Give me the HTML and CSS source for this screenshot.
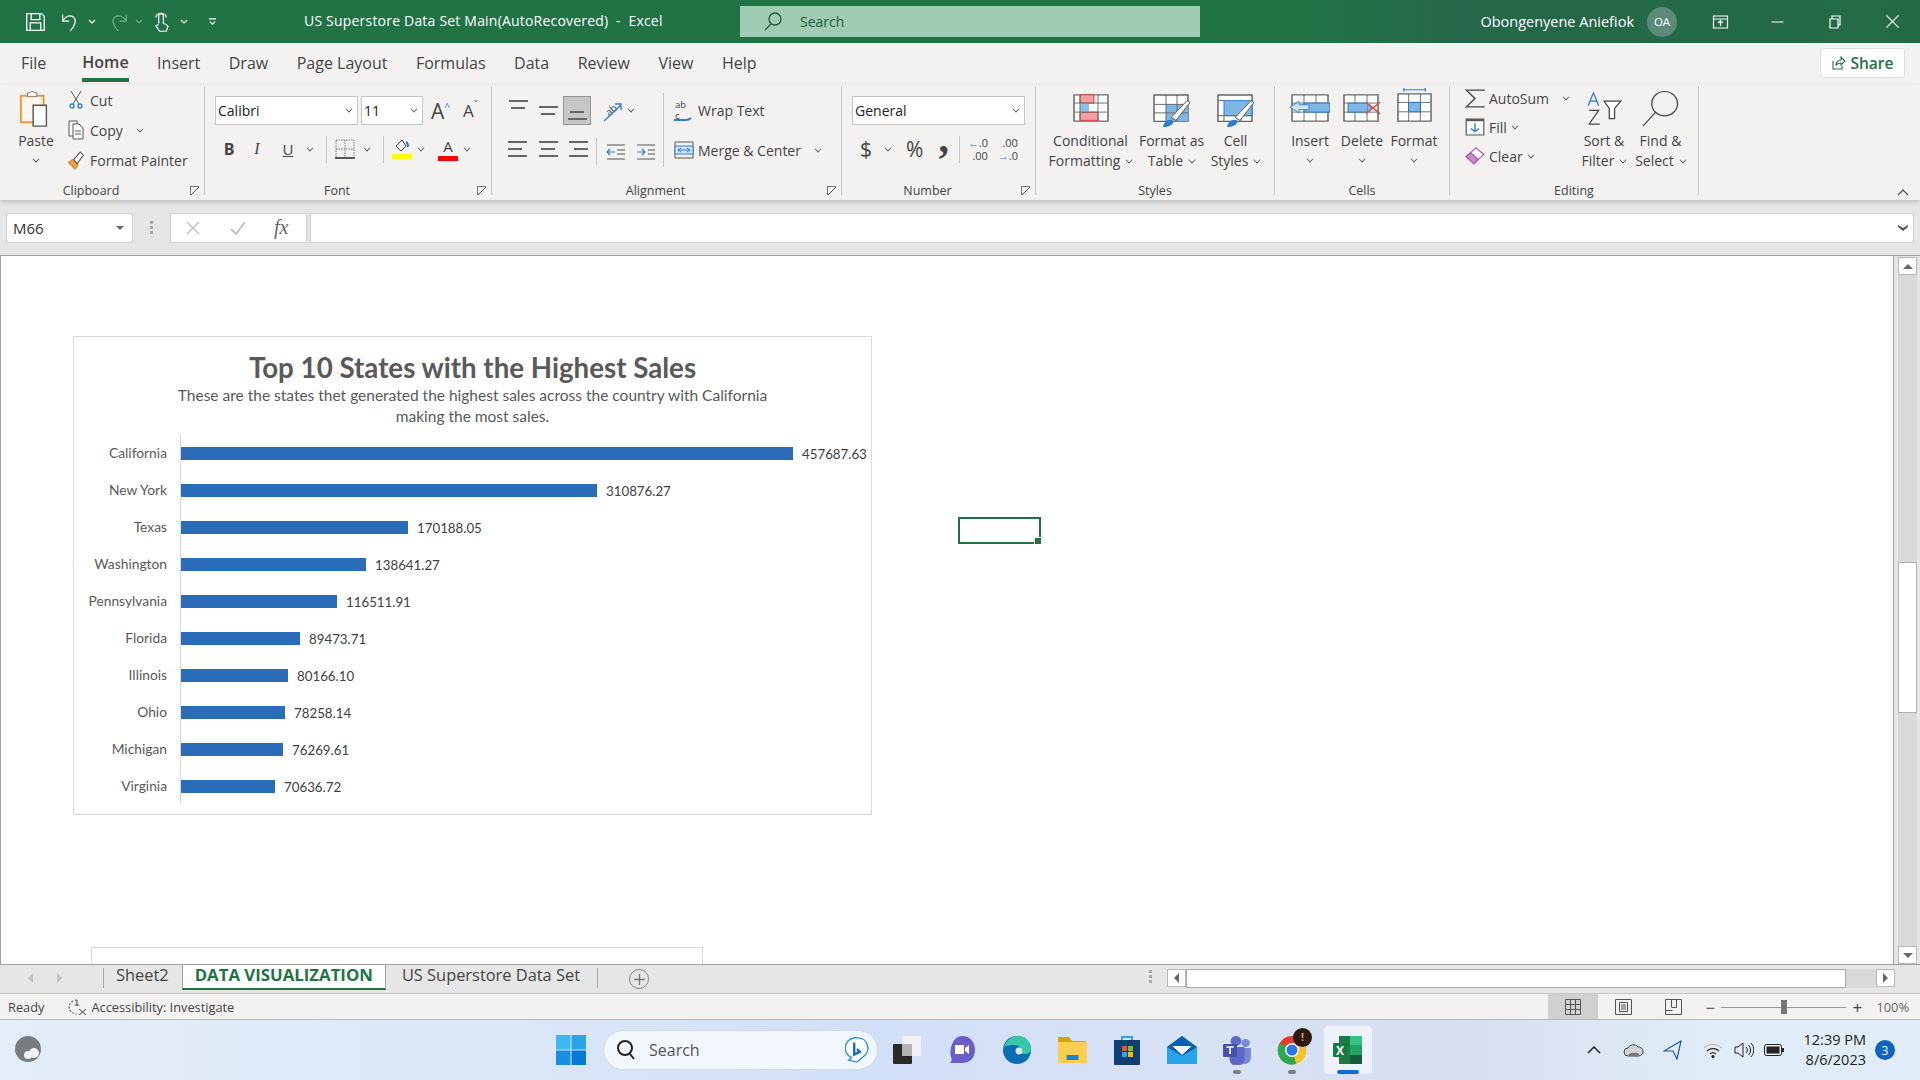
FILE: index.html
```html
<!DOCTYPE html>
<html lang="en">

<head>
    <meta charset="UTF-8">
    <title>US Superstore Data Set Main(AutoRecovered) - Excel</title>
    <link rel="stylesheet" href="styles.css">
</head>

<body>
    <!-- title bar -->
    <div class="titlebar">
        <div class="qat">
            <svg class="q-save" width="21" height="20" viewBox="0 0 24 24" preserveAspectRatio="none" fill="none" stroke="#fff" stroke-width="1.5"><path d="M2 2h17l3 3v17H2zM7 2v7h10V2M6 22v-9h12v9"/></svg>
            <svg class="q-undo" width="18" height="20" viewBox="0 0 22 24" preserveAspectRatio="none" fill="none" stroke="#fff" stroke-width="1.5"><path d="M2 3v8h8M2 11c3-6 9-8 13-5s3 10-4 17"/></svg>
            <svg class="q-chev" width="8" height="6" viewBox="0 0 8 6" fill="none" stroke="#fff" stroke-width="1.2"><path d="M1 1l3 3 3-3"/></svg>
            <svg class="q-redo" width="19" height="20" viewBox="0 0 22 24" preserveAspectRatio="none" fill="none" stroke="#6fa88a" stroke-width="1.5"><path d="M20 3v8h-8M20 11c-3-6-9-8-13-5s-3 10 4 17"/></svg>
            <svg class="q-chev2" width="8" height="6" viewBox="0 0 8 6" fill="none" stroke="#6fa88a" stroke-width="1.2"><path d="M1 1l3 3 3-3"/></svg>
            <svg class="q-touch" width="15" height="20" viewBox="0 0 16 26" preserveAspectRatio="none" fill="none" stroke="#fff" stroke-width="1.3"><path d="M5 15V5a2.500 2.500 0 0 1 5 0v10l3 1 2 3-2 6H6l-4-7 3-2M2 7a5.500 5.500 0 0 1 11 0"/></svg>
            <svg class="q-chev3" width="8" height="6" viewBox="0 0 8 6" fill="none" stroke="#fff" stroke-width="1.2"><path d="M1 1l3 3 3-3"/></svg>
            <svg width="9" height="8" viewBox="0 0 10 9" fill="none" stroke="#fff" stroke-width="1.2"><path d="M1 1h8M2 4l3 3 3-3"/></svg>
        </div>
        <div class="doc-title">US Superstore Data Set Main(AutoRecovered)&nbsp; -&nbsp; Excel</div>
        <div class="title-search">
            <svg width="18" height="20" viewBox="0 0 18 20" fill="none" stroke="#1d5c3c" stroke-width="1.3"><circle cx="11" cy="7" r="6"/><path d="M7 12l-6 6"/></svg>
            <span>Search</span>
        </div>
        <div class="account">
            <span class="user">Obongenyene Aniefiok</span>
            <span class="avatar">OA</span>
            <svg class="win-btn" width="17" height="14" viewBox="0 0 16 14" fill="none" stroke="#fff" stroke-width="1.2"><path d="M1 1h14v12H1zM1 4h14M8 11V6M5.500 8L8 5.500 10.500 8"/></svg>
            <svg class="win-btn" width="13" height="2" viewBox="0 0 12 2" stroke="#fff"><path d="M0 1h12"/></svg>
            <svg class="win-btn" width="12" height="14" viewBox="0 0 12 14" fill="none" stroke="#fff" stroke-width="1.2"><path d="M1 4h8v9H1zM3 4V1h8v9H9"/></svg>
            <svg class="win-btn" width="13" height="13" viewBox="0 0 12 12" stroke="#fff" stroke-width="1.1"><path d="M0 0l12 12M12 0L0 12"/></svg>
        </div>
    </div>

    <!-- tabs -->
    <div class="menu">
        <a>File</a>
        <a class="active">Home</a>
        <a>Insert</a>
        <a>Draw</a>
        <a>Page Layout</a>
        <a>Formulas</a>
        <a>Data</a>
        <a>Review</a>
        <a>View</a>
        <a>Help</a>
        <button class="share">
            <svg width="14" height="14" viewBox="0 0 14 14" fill="none" stroke="#217346" stroke-width="1.1"><path d="M1 5v8h9v-3M4 9c0-3 3-5 5-5V1l4 4-4 4V7C7 7 5 8 4 9z"/></svg>
            Share
        </button>
    </div>

    <!-- ribbon -->
    <div class="ribbon">
        <section class="group clipboard">
            <div class="group-body">
                <div class="big-btn paste">
                    <div class="big-icon high">
                        <svg width="34" height="38" viewBox="0 0 36 40" preserveAspectRatio="none"><path d="M2 6h24v28H2z" fill="#fdf6ea" stroke="#e8973a" stroke-width="2"/><path d="M9 7V3h3l2-2 2 2h3v4z" fill="#fff" stroke="#777" stroke-width="1"/><path d="M15 16h14v22H15z" fill="#fff" stroke="#555" stroke-width="1.5"/></svg>
                    </div>
                    <span>Paste</span>
                    <i class="caret below"></i>
                </div>
                <div class="stack">
                    <div class="small-btn">
                        <svg width="14" height="20" viewBox="0 0 14 20" fill="none"><path d="M2 1l8 13M12 1L4 14" stroke="#555" stroke-width="1"/><circle cx="3" cy="16" r="2" stroke="#2b7cd3" stroke-width="1.3"/><circle cx="11" cy="16" r="2" stroke="#2b7cd3" stroke-width="1.3"/></svg>
                        <span>Cut</span>
                    </div>
                    <div class="small-btn">
                        <svg width="16" height="20" viewBox="0 0 16 20" fill="#fff" stroke="#555"><path d="M1 1h8v15H1z"/><path d="M5 4h6l4 4v11H5zM7 11h6M7 14h6"/></svg>
                        <span>Copy</span>
                        <i class="caret wide"></i>
                    </div>
                    <div class="small-btn">
                        <svg width="17" height="19" viewBox="0 0 16 18"><path d="M1 11l6 6 3-4-5-5z" fill="#f0a23c" stroke="#d9762a"/><path d="M6 8l6-7 3 3-6 8z" fill="#fff" stroke="#555"/></svg>
                        <span>Format Painter</span>
                    </div>
                </div>
            </div>
            <div class="group-label launch">Clipboard<i class="launcher"></i></div>
        </section>

        <section class="group font">
            <div class="group-body column">
                <div class="row font-row">
                    <div class="combo font-name">Calibri<i class="caret"></i></div>
                    <div class="combo font-size">11<i class="caret"></i></div>
                    <span class="grow-font">A<sup>^</sup></span>
                    <span class="grow-font small">A<sup>ˇ</sup></span>
                </div>
                <div class="row tools">
                    <b class="tool">B</b>
                    <em class="tool">I</em>
                    <u class="tool under">U</u>
                    <i class="caret"></i>
                    <span class="sep"></span>
                    <svg class="icon" width="20" height="20" viewBox="0 0 20 20" fill="none" stroke="#777" stroke-dasharray="1.5 1"><path d="M1 1h18v18H1zM10 1v18M1 10h18"/><path d="M0 19h20" stroke="#333" stroke-width="1.5" stroke-dasharray="none"/></svg>
                    <i class="caret"></i>
                    <span class="sep"></span>
                    <span class="color-btn">
                        <svg width="18" height="14" viewBox="0 0 18 14" fill="none" stroke="#444"><path d="M3 7l6-6 4 6-5 5z"/><path d="M13 3c2 1 2 3 2 5" stroke="#2b7cd3" stroke-width="2"/></svg>
                        <span class="swatch yellow"></span>
                    </span>
                    <i class="caret"></i>
                    <span class="color-btn letter">A<span class="swatch red"></span></span>
                    <i class="caret"></i>
                </div>
            </div>
            <div class="group-label launch">Font<i class="launcher"></i></div>
        </section>

        <section class="group alignment">
            <div class="group-body">
                <div class="align-grid">
                    <span class="al top"><i></i><i class="s"></i></span>
                    <span class="al mid"><i></i><i class="s"></i></span>
                    <span class="al bot on"><i class="s"></i><i></i></span>
                    <span class="orient">
                        <svg width="22" height="24" viewBox="0 0 22 24" fill="none"><text x="5" y="15" transform="rotate(-40 10 12)" font-size="10" fill="#444" stroke="none" font-family="Open Sans, sans-serif">ab</text><path d="M3 22L20 6M14 5h6v6" stroke="#2b7cd3" stroke-width="1.3"/></svg>
                        <i class="caret"></i>
                    </span>
                    <span class="al left"><i></i><i class="s"></i><i></i></span>
                    <span class="al center"><i></i><i class="s"></i><i></i></span>
                    <span class="al right"><i></i><i class="s"></i><i></i></span>
                    <span class="indents">
                        <span class="sep"></span>
                        <svg width="20" height="18" viewBox="0 0 20 18" fill="none" stroke="#555" stroke-width="1.2"><path d="M1 2h18M11 7h8M11 11h8M1 16h18"/><path d="M9 9H1M4 6L1 9l3 3" stroke="#2b7cd3"/></svg>
                        <svg width="20" height="18" viewBox="0 0 20 18" fill="none" stroke="#555" stroke-width="1.2"><path d="M1 2h18M12 7h7M12 11h7M1 16h18"/><path d="M1 9h8M6 6l3 3-3 3" stroke="#2b7cd3"/></svg>
                    </span>
                </div>
                <div class="stack wrap-col">
                    <div class="small-btn">
                        <span class="wrap-abc">ab<br>c</span>
                        <span>Wrap Text</span>
                    </div>
                    <div class="small-btn">
                        <svg width="20" height="20" viewBox="0 0 20 20" fill="none" stroke="#555"><path d="M1 2h18v16H1z"/><path d="M1 6h18v8H1z" fill="#cde4f7" stroke="#2b7cd3"/><path d="M4 10h12M7 8l-3 2 3 2M13 8l3 2-3 2" stroke="#2b7cd3"/></svg>
                        <span>Merge &amp; Center</span>
                        <i class="caret wide"></i>
                    </div>
                </div>
            </div>
            <div class="group-label launch">Alignment<i class="launcher"></i></div>
        </section>

        <section class="group number">
            <div class="group-body column">
                <div class="row"><div class="combo format">General<i class="caret"></i></div></div>
                <div class="row tools number-tools">
                    <span class="num-sym">$</span>
                    <i class="caret"></i>
                    <span class="num-sym pct">%</span>
                    <b class="num-sym comma">,</b>
                    <span class="sep"></span>
                    <span class="dec"><b>←</b>.0<br>.00</span>
                    <span class="dec">.00<br><b>→</b>.0</span>
                </div>
            </div>
            <div class="group-label launch">Number<i class="launcher"></i></div>
        </section>

        <section class="group styles">
            <div class="group-body">
                <div class="big-btn cf">
                    <div class="big-icon">
                        <svg width="36" height="28" viewBox="0 0 36 34" preserveAspectRatio="none" fill="none"><path d="M1 1h34v32H1z" fill="#fff" stroke="#666" stroke-width="1.5"/><path d="M7 1h14v10H7zM7 22h18v10H7z" fill="#f6a0a5" stroke="#d9342b"/><path d="M7 11h9v11H7z" fill="#8fc0ea"/><path d="M1 11h34M1 22h34M7 1v32M25 1v32" stroke="#666"/></svg>
                    </div>
                    <span>Conditional<br>Formatting<i class="caret in"></i></span>
                </div>
                <div class="big-btn ft">
                    <div class="big-icon">
                        <svg width="38" height="34" viewBox="0 0 38 36" preserveAspectRatio="none" fill="none"><path d="M1 1h34v28H1z" fill="#fff" stroke="#666" stroke-width="1.5"/><path d="M13 11h22v18H13z" fill="#7fb6e8"/><path d="M1 11h34M1 20h34M13 1v28M24 1v28" stroke="#666"/><path d="M18 25L34 7l3 2-14 19z" fill="#fff" stroke="#555"/><path d="M10 35c1-6 6-9 10-7 2 3-3 7-10 7z" fill="#2b7cd3"/></svg>
                    </div>
                    <span>Format as<br>Table<i class="caret in"></i></span>
                </div>
                <div class="big-btn cs">
                    <div class="big-icon">
                        <svg width="38" height="34" viewBox="0 0 38 36" preserveAspectRatio="none" fill="none"><path d="M1 1h34v28H1z" fill="#fff" stroke="#666" stroke-width="1.5"/><path d="M7 7h28v16H7z" fill="#7fb6e8" stroke="#2b7cd3"/><path d="M1 7h6M1 23h34M7 23v6M24 23v6" stroke="#666"/><path d="M18 25L34 7l3 2-14 19z" fill="#fff" stroke="#555"/><path d="M10 35c1-6 6-9 10-7 2 3-3 7-10 7z" fill="#2b7cd3"/></svg>
                    </div>
                    <span>Cell<br>Styles<i class="caret in"></i></span>
                </div>
            </div>
            <div class="group-label">Styles</div>
        </section>

        <section class="group cells">
            <div class="group-body">
                <div class="big-btn">
                    <div class="big-icon">
                        <svg width="40" height="28" viewBox="0 0 40 34" preserveAspectRatio="none" fill="none"><path d="M2 1h36v32H2z" fill="#fff" stroke="#666" stroke-width="1.5"/><path d="M2 11h36M2 22h36M14 1v32M26 1v32" stroke="#666"/><path d="M14 11h26v11H14z" fill="#7fb6e8" stroke="#1f6cb5"/><path d="M0 16l9-7v4h10v6H9v4z" fill="#cfe3f6" stroke="#2b7cd3"/></svg>
                    </div>
                    <span>Insert</span>
                    <i class="caret below"></i>
                </div>
                <div class="big-btn">
                    <div class="big-icon">
                        <svg width="38" height="28" viewBox="0 0 38 34" preserveAspectRatio="none" fill="none"><path d="M1 1h34v32H1z" fill="#fff" stroke="#666" stroke-width="1.5"/><path d="M1 11h34M1 22h34M12 1v32M24 1v32" stroke="#666"/><path d="M5 11h20v11H5z" fill="#7fb6e8" stroke="#1f6cb5"/><path d="M25 11l6 5-6 6z" fill="#7fb6e8"/><path d="M23 10l14 14M37 10L23 24" stroke="#e8443a" stroke-width="1.5"/></svg>
                    </div>
                    <span>Delete</span>
                    <i class="caret below"></i>
                </div>
                <div class="big-btn">
                    <div class="big-icon tall">
                        <svg width="35" height="34" viewBox="0 0 36 40" preserveAspectRatio="none" fill="none"><path d="M7 2h22M7 0v4M29 0v4" stroke="#2b7cd3" stroke-width="1.3"/><path d="M1 7h34v32H1z" fill="#fff" stroke="#666" stroke-width="1.5"/><path d="M1 17h34M1 28h34M12 7v32M24 7v32" stroke="#666"/><path d="M12 17h12v11H12z" fill="#7fb6e8" stroke="#1f6cb5"/></svg>
                    </div>
                    <span>Format</span>
                    <i class="caret below"></i>
                </div>
            </div>
            <div class="group-label">Cells</div>
        </section>

        <section class="group editing">
            <div class="group-body">
                <div class="stack edit-col">
                    <div class="small-btn">
                        <svg width="18" height="19" viewBox="0 0 16 18" preserveAspectRatio="none" fill="none" stroke="#444" stroke-width="1.2"><path d="M15 2V1H1l7 8-7 8h14v-1"/></svg>
                        <span>AutoSum</span>
                        <i class="caret wide"></i>
                    </div>
                    <div class="small-btn">
                        <svg width="20" height="18" viewBox="0 0 17 17" preserveAspectRatio="none" fill="#fff" stroke="#555"><path d="M1 1h15v15H1z"/><path d="M1 2h15" stroke-width="2"/><path d="M8.5 5v8M5 10l3.500 3 3.500-3" fill="none" stroke="#2b7cd3" stroke-width="1.2"/></svg>
                        <span>Fill</span>
                        <i class="caret"></i>
                    </div>
                    <div class="small-btn">
                        <svg width="20" height="19" viewBox="0 0 18 20" preserveAspectRatio="none"><path d="M1 10l9-9 7 7-9 9z" fill="#fff" stroke="#a64ea8"/><path d="M1 10l4-4 7 7-4 5z" fill="#c88ac9" stroke="#a64ea8"/></svg>
                        <span>Clear</span>
                        <i class="caret"></i>
                    </div>
                </div>
                <div class="big-btn sort">
                    <div class="big-icon sort-icon">
                        <svg width="36" height="33" viewBox="0 0 34 36" preserveAspectRatio="none" fill="none"><path d="M2 15L7 1l5 14M4 10h6" stroke="#2b7cd3" stroke-width="1.2"/><path d="M3 20h9L3 35h10" stroke="#444" stroke-width="1.2"/><path d="M17 10h16l-6 8v11h-5V18z" fill="#fff" stroke="#444" stroke-width="1.2"/></svg>
                    </div>
                    <span>Sort &amp;<br>Filter<i class="caret in"></i></span>
                </div>
                <div class="big-btn find">
                    <div class="big-icon high">
                        <svg width="37" height="37" viewBox="0 0 36 38" preserveAspectRatio="none" fill="none" stroke="#444" stroke-width="1.2"><circle cx="22" cy="14" r="12.5"/><path d="M13 23L1 37"/></svg>
                    </div>
                    <span>Find &amp;<br>Select<i class="caret in"></i></span>
                </div>
            </div>
            <div class="group-label">Editing</div>
        </section>

        <svg class="collapse" width="12" height="7" viewBox="0 0 12 7" fill="none" stroke="#444" stroke-width="1.1"><path d="M1 6l5-5 5 5"/></svg>
    </div>

    <!-- formula bar -->
    <div class="formula-bar">
        <div class="name-box">M66<span class="tri"></span></div>
        <div class="grip"><i></i><i></i><i></i></div>
        <div class="fx-btns">
            <svg width="14" height="14" viewBox="0 0 14 14" stroke="#c4c4c4" stroke-width="1.6"><path d="M1 1l12 12M13 1L1 13"/></svg>
            <svg width="16" height="14" viewBox="0 0 16 14" fill="none" stroke="#c4c4c4" stroke-width="2"><path d="M1 8l5 5 9-12"/></svg>
            <span class="fx">fx</span>
        </div>
        <div class="formula-input"><svg width="10" height="6" viewBox="0 0 10 6" fill="#555"><path d="M0 0l5 3 5-3v2L5 6 0 2z"/></svg></div>
    </div>

    <!-- sheet -->
    <div class="workspace">
        <div class="sheet">
            <div class="chart">
                <h1>Top 10 States with the Highest Sales</h1>
                <p>These are the states thet generated the highest sales across the country with California<br>making the most sales.</p>
                <div class="plot">
                    <div class="bar-row"><span class="state">California</span><span class="bar" style="width:612px"></span><span class="val">457687.63</span></div>
                    <div class="bar-row"><span class="state">New York</span><span class="bar" style="width:416px"></span><span class="val">310876.27</span></div>
                    <div class="bar-row"><span class="state">Texas</span><span class="bar" style="width:227px"></span><span class="val">170188.05</span></div>
                    <div class="bar-row"><span class="state">Washington</span><span class="bar" style="width:185px"></span><span class="val">138641.27</span></div>
                    <div class="bar-row"><span class="state">Pennsylvania</span><span class="bar" style="width:156px"></span><span class="val">116511.91</span></div>
                    <div class="bar-row"><span class="state">Florida</span><span class="bar" style="width:119px"></span><span class="val">89473.71</span></div>
                    <div class="bar-row"><span class="state">Illinois</span><span class="bar" style="width:107px"></span><span class="val">80166.10</span></div>
                    <div class="bar-row"><span class="state">Ohio</span><span class="bar" style="width:104px"></span><span class="val">78258.14</span></div>
                    <div class="bar-row"><span class="state">Michigan</span><span class="bar" style="width:102px"></span><span class="val">76269.61</span></div>
                    <div class="bar-row"><span class="state">Virginia</span><span class="bar" style="width:94px"></span><span class="val">70636.72</span></div>
                </div>
            </div>
            <div class="active-cell"></div>
            <div class="next-chart"></div>
        </div>
        <div class="vscroll">
            <span class="sb-btn"><i class="tri-up"></i></span>
            <div class="vtrack"><span class="vthumb"></span></div>
            <span class="sb-btn"><i class="tri-down"></i></span>
        </div>
    </div>

    <!-- sheet tabs -->
    <div class="tabs">
        <div class="tab-nav"><i class="nav-l"></i><i class="nav-r"></i></div>
        <a class="sheet-tab first">Sheet2</a>
        <a class="sheet-tab current">DATA VISUALIZATION</a>
        <a class="sheet-tab last">US Superstore Data Set</a>
        <span class="add-sheet">
            <svg width="11" height="11" viewBox="0 0 11 11" stroke="#777" stroke-width="1.4"><path d="M5.500 0v11M0 5.500h11"/></svg>
        </span>
        <div class="grip hgrip"><i></i><i></i><i></i></div>
        <div class="hscroll">
            <span class="sb-btn"><i class="nav-l dark"></i></span>
            <div class="htrack"><span class="hthumb"></span></div>
            <span class="sb-btn"><i class="nav-r dark"></i></span>
        </div>
    </div>

    <!-- status bar -->
    <div class="status">
        <span>Ready</span>
        <span class="a11y">
            <svg width="19" height="17" viewBox="0 0 17 17" preserveAspectRatio="none" fill="none" stroke="#555"><path d="M8 1a7 7 0 1 0 0 14" stroke-dasharray="2 1.5"/><path d="M8 1v6M6 6h4M10 10l6 6M16 10l-6 6"/></svg>
            Accessibility: Investigate
        </span>
        <div class="views">
            <span class="view on"><svg width="16" height="16" viewBox="0 0 16 16" fill="none" stroke="#555"><path d="M.5.5h15v15H.5zM5.500.5v15M10.500.5v15M.5 5.500h15M.5 10.500h15"/></svg></span>
            <span class="view"><svg width="17" height="16" viewBox="0 0 17 16" fill="none" stroke="#555"><path d="M.5.5h16v15H.5zM4.500 3.500h8v9h-8zM6 6h5M6 8h5M6 10h5"/></svg></span>
            <span class="view"><svg width="17" height="16" viewBox="0 0 17 16" fill="none" stroke="#555"><path d="M.5.5h16v15H.5zM6.500.5v8h5v-8M.5 11.500h7"/></svg></span>
        </div>
        <div class="zoom-ctl">
            <span class="zoom-sign">−</span>
            <span class="zoom-track"><i></i></span>
            <span class="zoom-sign">+</span>
            <span class="zoom-pct">100%</span>
        </div>
    </div>

    <!-- windows taskbar -->
    <div class="taskbar">
        <div class="weather">
            <svg width="30" height="30" viewBox="0 0 30 30"><circle cx="14" cy="14" r="13" fill="#777c80"/><circle cx="20" cy="18" r="5" fill="#f1f3f6"/><circle cx="14" cy="20" r="4" fill="#f1f3f6"/></svg>
        </div>
        <div class="task-center">
            <svg class="start" width="30" height="30" viewBox="0 0 30 30"><rect width="14.5" height="14.5" fill="#3cb8f0"/><rect x="15.5" width="14.5" height="14.5" fill="#2aa4e8"/><rect y="15.5" width="14.5" height="14.5" fill="#1a8fe0"/><rect x="15.5" y="15.5" width="14.5" height="14.5" fill="#0a78d6"/></svg>
            <div class="task-search">
                <svg width="20" height="22" viewBox="0 0 20 22" fill="none" stroke="#222" stroke-width="2"><circle cx="9" cy="9" r="7"/><path d="M14 15l4 5"/></svg>
                <span>Search</span>
                <svg class="bing" width="24" height="26" viewBox="0 0 24 28" fill="none"><path d="M12 1a11 11 0 0 1 7 20l-7 6-9-2 3-3A11 11 0 0 1 12 1z" fill="#fff" stroke="#2a8fe0" stroke-width="1.5"/><path d="M9 6v13l6-3-3-3" stroke="#0f6cbd" stroke-width="2.5"/></svg>
            </div>
            <span class="app"><svg width="28" height="28" viewBox="0 0 28 28"><rect y="8" width="19" height="20" rx="1" fill="#2a2a2a"/><rect x="9" y="0" width="19" height="20" rx="1" fill="#f1f2f5"/><rect x="9" y="8" width="10" height="12" fill="#b4b4b4"/></svg></span>
            <span class="app"><svg width="28" height="30" viewBox="0 0 28 30"><path d="M14 1c8 0 13 6 13 14S22 28 14 28H2c2-2 2-4 1-6-2-8 2-21 11-21z" fill="#6a5fc9"/><path d="M7 10h9v9H7z" fill="#fff"/><path d="M17 13l4-3v9l-4-3z" fill="#fff"/></svg></span>
            <span class="app"><svg width="30" height="30" viewBox="0 0 30 30"><circle cx="15" cy="15" r="14" fill="#0c6bb5"/><path d="M2 13C4 4 12 0 18 1c7 1 11 7 11 13 0 3-3 5-7 5-4 0-6-2-5-3 2-1 1-6-4-6-4 0-9 0-11 3z" fill="#34c8a5"/><circle cx="17" cy="16" r="3.5" fill="#d6e3f7"/></svg></span>
            <span class="app"><svg width="30" height="28" viewBox="0 0 28 28" preserveAspectRatio="none"><path d="M1 1h10l3 4h13v4H1z" fill="#d99e10"/><path d="M1 6h27v21H1z" fill="#fcd04e"/><path d="M9 19h11v5H9z" fill="#1a83d0"/></svg></span>
            <span class="app"><svg width="28" height="30" viewBox="0 0 28 30"><path d="M9 6V2h10v4" fill="none" stroke="#29a5e0" stroke-width="2"/><path d="M1 5h26v24a1 1 0 0 1-1 1H2a1 1 0 0 1-1-1z" fill="#113f74"/><rect x="9" y="11" width="5" height="5" fill="#e8523a"/><rect x="15" y="11" width="5" height="5" fill="#7dbb3c"/><rect x="9" y="17" width="5" height="5" fill="#2ba6e0"/><rect x="15" y="17" width="5" height="5" fill="#f7b917"/></svg></span>
            <span class="app"><svg width="30" height="28" viewBox="0 0 28 28" preserveAspectRatio="none"><path d="M0 11L14 0l14 11v17H0z" fill="#27a4ea"/><path d="M0 11L14 0l14 11-14 9z" fill="#0b5fa8"/><path d="M5 10h18l-9 9z" fill="#eef4fb"/></svg></span>
            <span class="app running"><svg width="30" height="30" viewBox="0 0 28 30" preserveAspectRatio="none"><circle cx="22" cy="8" r="4" fill="#7c85d8"/><path d="M15 13h12v10a6 6 0 0 1-12 0z" fill="#7c85d8"/><circle cx="13" cy="6" r="5" fill="#5e69c7"/><path d="M7 12h14v12a7 7 0 0 1-14 0z" fill="#5e69c7"/><rect x="1" y="9" width="13" height="13" rx="1" fill="#454fa8"/><path d="M4 12h7M7.5 12v7" stroke="#fff" stroke-width="1.5"/></svg></span>
            <span class="app running"><svg width="30" height="30" viewBox="0 0 30 30"><circle cx="15" cy="15" r="14" fill="#e33b2e"/><path d="M15 15L27 8a14 14 0 0 1-8 21z" fill="#f7c428"/><path d="M15 15l4 14A14 14 0 0 1 3 8z" fill="#2da94f"/><circle cx="15" cy="15" r="7" fill="#fff"/><circle cx="15" cy="15" r="5.5" fill="#2b78e4"/></svg><em class="alert">!</em></span>
            <span class="app excel"><svg width="30" height="30" viewBox="0 0 30 30"><path d="M6 1h23v28H6z" fill="#1f7a47"/><path d="M17 1h12v9H17z" fill="#33c481"/><path d="M17 10h12v10H17z" fill="#21a366"/><path d="M17 20h12v9H17z" fill="#185c37"/><rect x="0" y="8" width="14" height="14" rx="1" fill="#107c41"/></svg><b>X</b></span>
        </div>
        <div class="tray">
            <svg width="14" height="8" viewBox="0 0 14 8" fill="none" stroke="#222" stroke-width="1.5"><path d="M1 7l6-6 6 6"/></svg>
            <svg class="tray-cloud" width="21" height="14" viewBox="0 0 21 14"><path d="M5 13a4 4 0 0 1 0-8 6 6 0 0 1 10-1 4.5 4.5 0 0 1 1 9z" fill="#d2d4d8" stroke="#444"/><path d="M5 13c1-3 4-4 6-3 3-1 5 0 6 3z" fill="#777"/></svg>
            <svg class="tray-loc" width="19" height="20" viewBox="0 0 19 20" fill="none" stroke="#1c56a8" stroke-width="1.2"><path d="M18 1L1 11l9 0 4 8z"/></svg>
            <svg class="tray-wifi" width="20" height="15" viewBox="0 0 20 15" fill="none" stroke="#222" stroke-width="1.2"><path d="M1 5a13 13 0 0 1 18 0" stroke="#bbb"/><path d="M4 8a9 9 0 0 1 12 0M7 11a4.5 4.5 0 0 1 6 0"/><circle cx="10" cy="13.5" r="1" fill="#222"/></svg>
            <svg class="tray-vol" width="20" height="16" viewBox="0 0 20 16" fill="none" stroke="#222" stroke-width="1"><path d="M1 5h3l5-4v14l-5-4H1zM12 5a4 4 0 0 1 0 6M14.5 3a7 7 0 0 1 0 10M17 1a10 10 0 0 1 0 14"/></svg>
            <svg class="tray-bat" width="20" height="12" viewBox="0 0 20 12"><rect x=".5" y=".5" width="17" height="11" rx="2" fill="none" stroke="#222"/><rect x="2.5" y="2.5" width="13" height="7" fill="#222"/><rect x="18" y="4" width="2" height="4" fill="#222"/></svg>
            <div class="clock">12:39 PM<br>8/6/2023</div>
            <span class="notif">3</span>
        </div>
    </div>
</body>

</html>
```

FILE: styles.css
```css
* {
    box-sizing: border-box;
}

body {
    margin: 0;
    width: 1920px;
    height: 1080px;
    overflow: hidden;
    display: flex;
    flex-direction: column;
    font-family: "Open Sans", "Liberation Sans", sans-serif;
    font-size: 14px;
    color: #444;
    background: #f3f2f1;
}

svg {
    flex-shrink: 0;
}

/* title bar */
.titlebar {
    height: 43px;
    display: flex;
    align-items: center;
    background: linear-gradient(90deg, #217346 68%, #25674a 76%, #236b45 100%);
    color: #fff;
}

.qat {
    display: flex;
    align-items: center;
    width: 304px;
    padding-left: 25px;
}

.q-save {
    margin-right: 15px;
}

.q-undo {
    margin-right: 9px;
}

.q-chev {
    margin-right: 13px;
}

.q-redo {
    margin-right: 7px;
}

.q-chev2 {
    margin-right: 11px;
}

.q-touch {
    margin-right: 11px;
}

.q-chev3 {
    margin-right: 20px;
}

.doc-title {
    width: 436px;
    padding-bottom: 2px;
    font-size: 14px;
    letter-spacing: .2px;
    white-space: nowrap;
}

.title-search {
    width: 460px;
    height: 31px;
    background: #a0ccb4;
    display: flex;
    align-items: center;
    padding-left: 24px;
    gap: 18px;
    color: #1d5c3c;
    font-size: 14px;
}

.account {
    margin-left: auto;
    display: flex;
    align-items: center;
    height: 43px;
}

.user {
    font-size: 14.5px;
    margin-right: 13px;
    white-space: nowrap;
}

.avatar {
    width: 30px;
    height: 30px;
    border-radius: 50%;
    background: #5e8b79;
    display: flex;
    align-items: center;
    justify-content: center;
    font-size: 11.5px;
    margin-right: 35px;
}

.win-btn {
    margin-right: 42px;
}

.win-btn:nth-of-type(2),
.win-btn:nth-of-type(3) {
    margin-right: 45px;
}

.win-btn:last-child {
    margin-right: 21px;
}

/* tab row */
.menu {
    height: 42px;
    display: flex;
    align-items: center;
    padding-left: 21px;
    font-size: 16px;
    color: #444;
}

.menu a {
    margin-right: 28.5px;
    line-height: 36px;
    height: 36px;
    margin-top: -3px;
    white-space: nowrap;
}

.menu a:first-child {
    margin-right: 36px;
}

.menu .active {
    font-weight: 600;
    height: 37px;
    margin-top: -1px;
    border-bottom: 4px solid #217346;
    line-height: 34px;
}

.share {
    margin-left: auto;
    margin-right: 15px;
    margin-top: -2px;
    width: 85px;
    height: 30px;
    border: 1px solid #e1dfdd;
    border-radius: 3px;
    background: #fff;
    display: flex;
    align-items: center;
    justify-content: center;
    gap: 5px;
    color: #217346;
    font: 600 15.5px "Open Sans", sans-serif;
}

/* ribbon */
.ribbon {
    height: 115px;
    display: flex;
    position: relative;
    box-shadow: 0 2px 5px rgba(0, 0, 0, .2);
    z-index: 2;
    font-size: 14px;
}

.group {
    display: flex;
    flex-direction: column;
    flex-shrink: 0;
    border-right: 1px solid #c8c6c4;
    margin-bottom: 5px;
    margin-top: 1px;
}

.group-body {
    flex: 1;
    display: flex;
    min-height: 0;
}

.group-body.column {
    flex-direction: column;
}

.group-label {
    height: 14px;
    font-size: 12.5px;
    text-align: center;
    position: relative;
    line-height: 19px;
}

.group-label.launch {
    padding-right: 22px;
}

.launcher {
    position: absolute;
    right: 5px;
    top: 5px;
    width: 9px;
    height: 9px;
    border-left: 1px solid #777;
    border-top: 1px solid #777;
    background: linear-gradient(135deg, transparent 45%, #555 45%, #555 55%, transparent 55%);
}

.clipboard {
    width: 205px;
}

.font {
    width: 287px;
}

.alignment {
    width: 350px;
}

.number {
    width: 194px;
}

.styles {
    width: 239px;
}

.cells {
    width: 175px;
}

.editing {
    width: 249px;
}

.big-btn {
    display: flex;
    flex-direction: column;
    align-items: center;
    text-align: center;
    line-height: 19.5px;
    white-space: nowrap;
    width: 50px;
}

.big-icon {
    height: 45px;
    padding-top: 8px;
}

.big-icon.high {
    padding-top: 4px;
}

.big-icon.tall {
    padding-top: 2px;
}

.big-icon.sort-icon {
    padding-top: 6px;
}

.caret {
    display: inline-block;
    flex-shrink: 0;
    width: 6px;
    height: 6px;
    border-right: 1.2px solid #555;
    border-bottom: 1.2px solid #555;
    transform: scale(.8, .8) rotate(45deg);
    margin: 0 5px 3px;
}

.caret.in {
    margin: 0 0 3px 6px;
}

.caret.below {
    margin: 5px 0 0;
}

.paste {
    width: 48px;
    margin-left: 12px;
}

.stack {
    display: flex;
    flex-direction: column;
    padding-top: 2px;
    gap: 6px;
    margin-left: 6px;
}

.small-btn {
    display: flex;
    align-items: center;
    gap: 4px;
    height: 24px;
    white-space: nowrap;
}

.small-btn svg {
    width: 20px;
}

.small-btn .caret {
    margin-left: 1px;
}

.small-btn .caret.wide {
    margin-left: 10px;
}

.wrap-abc {
    width: 20px;
    height: 22px;
    font-size: 9.5px;
    line-height: 11px;
    padding-left: 1px;
    border-right: 2px solid transparent;
    border-bottom: 2px solid #2b7cd3;
    border-bottom-right-radius: 8px;
}

/* font group */
.row {
    display: flex;
    align-items: center;
}

.font-row {
    margin: 10px 0 0 10px;
    gap: 3px;
}

.combo {
    height: 29px;
    background: #fff;
    border: 1px solid #c8c6c4;
    display: flex;
    align-items: center;
    justify-content: space-between;
    padding-left: 2px;
    color: #222;
    font-size: 14px;
}

.font-name {
    width: 143px;
}

.font-size {
    width: 62px;
}

.combo .caret {
    margin: 0 5px 3px 0;
}

.grow-font {
    font-size: 21px;
    width: 29px;
    margin-left: 5px;
    line-height: 24px;
    white-space: nowrap;
}

.grow-font.small {
    font-size: 17px;
    width: 22px;
    margin-left: 0;
}

.grow-font sup {
    font-size: 10px;
    color: #2b7cd3;
    vertical-align: 8px;
    line-height: 0;
}

.tools {
    margin-top: 10px;
    height: 28px;
}

.font .tools {
    padding-left: 10px;
}

.tool {
    width: 28px;
    text-align: center;
    font-size: 16px;
    font-family: "Liberation Serif", serif;
}

b.tool {
    font-family: "Open Sans", sans-serif;
}

.tool.under {
    font-family: "Open Sans", sans-serif;
    font-size: 15px;
    margin-left: 3px;
}

.sep {
    width: 1px;
    height: 27px;
    background: #c8c6c4;
    margin: 0 8px;
    flex-shrink: 0;
}

.icon {
    margin-right: 4px;
}

.color-btn {
    width: 22px;
    margin-left: -1px;
    display: flex;
    flex-direction: column;
    align-items: center;
    font-size: 15px;
    line-height: 17px;
}

.letter {
    margin-left: 8px;
}

.swatch {
    width: 20px;
    height: 5px;
    margin-top: 1px;
    display: block;
}

.yellow {
    background: #ffff00;
}

.red {
    background: #ff0000;
}

/* alignment */
.align-grid {
    display: grid;
    width: 155px;
    grid-template-columns: 30px 30px 30px auto;
    grid-template-rows: 29px 29px;
    row-gap: 12px;
    margin: 10px 0 0 16px;
    flex-shrink: 0;
}

.al {
    width: 20px;
    height: 29px;
    display: flex;
    flex-direction: column;
    gap: 5px;
    padding: 4px 0;
    align-items: center;
}

.al i {
    width: 19px;
    height: 2px;
    background: #666;
}

.al i.s {
    width: 14px;
}

.al.left {
    align-items: flex-start;
}

.al.right {
    align-items: flex-end;
}

.al.mid {
    justify-content: center;
}

.al.bot {
    justify-content: flex-end;
}

.al.on {
    width: 28px;
    background: #c8c6c4;
    border: 1px solid #979593;
    margin-left: -5px;
}

.orient {
    display: flex;
    align-items: center;
    margin-left: 3px;
}

.indents {
    display: flex;
    align-items: center;
}

.indents .sep {
    margin: 0 9px 0 -2px;
}

.indents svg + svg {
    margin-left: 10px;
}

.wrap-col {
    margin: 7px 0 0;
    padding: 5px 0 0 10px;
    height: 74px;
    gap: 16px;
    border-left: 1px solid #c8c6c4;
}

/* number */
.combo.format {
    width: 173px;
    margin: 10px 0 0 10px;
}

.number-tools {
    padding-left: 18px;
}

.number-tools .sep {
    margin: 0 8px 0 10px;
}

.number-tools .caret {
    margin: 0 15px 3px 13px;
}

.num-sym {
    font-size: 21px;
    line-height: 28px;
    font-weight: 400;
}

.comma {
    font-size: 42px;
    font-weight: 700;
    line-height: 20px;
    margin: -22px 0 0 15px;
    font-family: "Liberation Serif", serif;
}

.dec {
    font-size: 11px;
    line-height: 13px;
    width: 20px;
    text-align: right;
    white-space: nowrap;
}

.dec + .dec {
    margin-left: 10px;
}

.dec b {
    color: #2b7cd3;
    font-weight: 400;
    font-size: 11px;
}

/* styles/cells/editing */
.styles .group-body {
    padding-left: 12px;
    gap: 6px;
}

.cf {
    width: 85px;
}

.ft {
    width: 65px;
}

.cs {
    width: 51px;
}

.cells .group-body {
    padding-left: 10px;
    gap: 2px;
}

.edit-col {
    margin-left: 15px;
    width: 116px;
    padding-top: 0;
    gap: 5px;
    flex-shrink: 0;
}

.sort {
    width: 46px;
    margin-right: 7px;
}

.find {
    width: 53px;
}

.collapse {
    position: absolute;
    right: 11px;
    bottom: 4px;
}

/* formula bar */
.formula-bar {
    height: 55px;
    display: flex;
    align-items: center;
    background: #e6e6e6;
    padding: 0 6px;
}

.name-box {
    width: 127px;
    height: 30px;
    background: #fff;
    border: 1px solid #d0d0d0;
    display: flex;
    align-items: center;
    justify-content: space-between;
    padding: 0 8px 0 6px;
    font-size: 15px;
    color: #333;
}

.tri {
    border: 4px solid transparent;
    border-top: 4px solid #666;
    margin-top: 4px;
}

.grip {
    width: 37px;
    display: flex;
    flex-direction: column;
    align-items: center;
    gap: 2px;
}

.grip i {
    width: 3px;
    height: 3px;
    background: #a8a8a8;
}

.fx-btns {
    width: 137px;
    height: 30px;
    background: #fff;
    border: 1px solid #d0d0d0;
    display: flex;
    align-items: center;
    gap: 30px;
    padding-left: 15px;
    margin-right: 3px;
}

.fx {
    font: italic 20px "Liberation Serif", serif;
    color: #666;
    margin-left: -2px;
}

.formula-input {
    flex: 1;
    height: 30px;
    background: #fff;
    border: 1px solid #d0d0d0;
    display: flex;
    align-items: center;
    justify-content: flex-end;
    padding-right: 5px;
}

/* sheet area */
.workspace {
    height: 710px;
    display: flex;
    border-top: 1px solid #a0a0a0;
    border-bottom: 1px solid #a0a0a0;
    background: #e6e6e6;
}

.sheet {
    width: 1894px;
    background: #fff;
    border-left: 1px solid #a0a0a0;
    border-right: 1px solid #a0a0a0;
    position: relative;
    overflow: hidden;
}

.chart {
    position: absolute;
    left: 72px;
    top: 80px;
    width: 799px;
    height: 479px;
    border: 1px solid #d9d9d9;
    color: #595959;
    font-family: Lato, "Open Sans", sans-serif;
}

.chart h1 {
    margin: 15px 0 0;
    text-align: center;
    font-size: 27.7px;
    font-weight: 700;
    line-height: 32px;
}

.chart p {
    margin: 1px 0 0;
    text-align: center;
    font-size: 15.5px;
    line-height: 21px;
}

.plot {
    margin: 7px 0 0 106px;
    width: 690px;
    height: 371px;
    border-left: 1px solid #d9d9d9;
    display: flex;
    flex-direction: column;
    gap: 24px;
    padding-top: 13px;
}

.bar-row {
    display: flex;
    align-items: center;
    position: relative;
    height: 13px;
    flex-shrink: 0;
}

.bar {
    height: 13px;
    background: #2b6cb9;
}

.val {
    margin-left: 9px;
    font-size: 13.3px;
    color: #404040;
}

.state {
    position: absolute;
    right: 100%;
    margin-right: 14px;
    top: -3px;
    font-size: 13.8px;
    white-space: nowrap;
}

.active-cell {
    position: absolute;
    left: 957px;
    top: 261px;
    width: 83px;
    height: 27px;
    border: 2px solid #217346;
}

.active-cell::after {
    content: "";
    position: absolute;
    right: -3px;
    bottom: -3px;
    width: 6px;
    height: 6px;
    background: #217346;
    border: 1px solid #fff;
}

.next-chart {
    position: absolute;
    left: 90px;
    top: 691px;
    width: 612px;
    height: 30px;
    border: 1px solid #d9d9d9;
}

/* scrollbars */
.vscroll {
    width: 19px;
    margin-left: 4px;
    display: flex;
    flex-direction: column;
    padding-top: 1px;
}

.sb-btn {
    width: 19px;
    height: 18px;
    background: #fff;
    border: 1px solid #b8b8b8;
    display: flex;
    align-items: center;
    justify-content: center;
    flex-shrink: 0;
}

.tri-up,
.tri-down {
    border: 5px solid transparent;
}

.tri-up {
    border-bottom: 5px solid #666;
    margin-top: -5px;
}

.tri-down {
    border-top: 5px solid #666;
    margin-top: 5px;
}

.vtrack {
    flex: 1;
    position: relative;
    background: #d9d9d9;
}

.vthumb {
    position: absolute;
    top: 287px;
    left: 0;
    width: 19px;
    height: 151px;
    background: #fff;
    border: 1px solid #b0b0b0;
}

/* sheet tabs */
.tabs {
    height: 28px;
    display: flex;
    align-items: flex-start;
    background: #e6e6e6;
    font-size: 16.4px;
    color: #444;
}

.tab-nav {
    width: 103px;
    height: 26px;
    display: flex;
    align-items: center;
    gap: 24px;
    padding-left: 28px;
}

.nav-l,
.nav-r {
    border: 4px solid transparent;
    border-top-width: 5px;
    border-bottom-width: 5px;
}

.nav-l {
    border-right: 5px solid #c0c0c0;
    border-left: 0;
}

.nav-r {
    border-left: 5px solid #c0c0c0;
    border-right: 0;
}

.dark.nav-l {
    border-right-color: #666;
}

.dark.nav-r {
    border-left-color: #666;
}

.sheet-tab {
    white-space: nowrap;
}

.first,
.last {
    margin-top: 3px;
    height: 20px;
    line-height: 14px;
}

.first {
    border-left: 1px solid #a8a8a8;
    padding: 0 13px 0 12px;
}

.last {
    border-right: 1px solid #a8a8a8;
    padding: 0 17px 0 16px;
}

.current {
    height: 25px;
    line-height: 20px;
    background: #fff;
    color: #217346;
    font-weight: 700;
    font-size: 16.8px;
    border-bottom: 2px solid #217346;
    border-left: 1px solid #a0a0a0;
    border-right: 1px solid #a0a0a0;
    padding: 0 12px;
}

.add-sheet {
    width: 20px;
    height: 20px;
    border-radius: 50%;
    border: 1.5px solid #888;
    display: flex;
    align-items: center;
    justify-content: center;
    margin: 4px 0 0 31px;
}

.hgrip {
    width: 24px;
    margin: 5px 0 0 auto;
}

.hscroll {
    display: flex;
    height: 19px;
    width: 728px;
    margin: 4px 25px 0 5px;
}

.htrack {
    flex: 1;
    height: 19px;
    background: #d9d9d9;
}

.hthumb {
    display: block;
    width: 660px;
    height: 19px;
    background: #fff;
    border: 1px solid #a8a8a8;
}

/* status */
.status {
    height: 27px;
    display: flex;
    align-items: center;
    border-top: 1px solid #c8c8c8;
    border-bottom: 1px solid #b8b8b8;
    padding: 1px 0 0 8px;
    font-size: 12.8px;
    color: #444;
}

.a11y {
    display: flex;
    align-items: center;
    gap: 4px;
    margin-left: 24px;
}

.views {
    display: flex;
    margin-left: auto;
    height: 25px;
    margin-top: -1px;
}

.view {
    width: 50px;
    display: flex;
    align-items: center;
    justify-content: center;
}

.view.on {
    background: #d0d0ce;
}

.zoom-ctl {
    display: flex;
    align-items: center;
    margin: 0 11px 0 4px;
}

.zoom-sign {
    width: 16px;
    font-size: 17px;
    text-align: center;
}

.zoom-track {
    width: 125px;
    height: 1px;
    background: #9a9a9a;
    margin: 0 3px;
    position: relative;
}

.zoom-track i {
    position: absolute;
    left: 60px;
    top: -7px;
    width: 6px;
    height: 14px;
    background: #777;
}

.zoom-pct {
    margin-left: 11px;
    color: #666;
}

/* taskbar */
.taskbar {
    height: 60px;
    display: flex;
    align-items: center;
    background: linear-gradient(90deg, #e4eef8 0%, #dce7f8 25%, #d2e0f7 45%, #d8e2f5 65%, #d6deef 75%, #e1edf8 90%, #e0edf8 100%);
    position: relative;
    color: #222;
}

.weather {
    width: 556px;
    padding-left: 14px;
    display: flex;
}

.task-center {
    display: flex;
    align-items: center;
    height: 60px;
}

.start {
    margin-right: 17px;
}

.task-search {
    width: 275px;
    height: 40px;
    background: #f2f6fd;
    border-radius: 20px;
    border: 1px solid #cfd8e8;
    display: flex;
    align-items: center;
    padding: 0 8px 0 12px;
    font-size: 16px;
    gap: 13px;
    color: #555;
    margin-right: 1px;
}

.bing {
    margin-left: auto;
}

.app {
    width: 55px;
    height: 60px;
    display: flex;
    align-items: center;
    justify-content: center;
    position: relative;
    flex-shrink: 0;
}

.running::after {
    content: "";
    position: absolute;
    bottom: 6px;
    left: 50%;
    margin-left: -4px;
    width: 8px;
    height: 4px;
    border-radius: 2px;
    background: #7a7f87;
}

.alert {
    position: absolute;
    top: 8px;
    right: 7px;
    width: 19px;
    height: 19px;
    border-radius: 50%;
    background: #2a1a12;
    color: #e0a060;
    font: 700 10px/19px "Open Sans", sans-serif;
    text-align: center;
}

.excel {
    background: #eef3fb;
    border-radius: 4px;
    height: 48px;
    width: 48px;
    margin-left: 5px;
}

.excel b {
    position: absolute;
    left: 12px;
    top: 16px;
    font: 700 12px "Open Sans", sans-serif;
    color: #fff;
}

.excel::after {
    content: "";
    position: absolute;
    bottom: 0;
    left: 50%;
    margin-left: -11px;
    width: 22px;
    height: 4px;
    border-radius: 2px;
    background: #0f6cdb;
}

.tray {
    position: absolute;
    right: 25px;
    top: 0;
    height: 60px;
    display: flex;
    align-items: center;
}

.tray-cloud {
    margin-left: 22px;
}

.tray-loc {
    margin-left: 19px;
}

.tray-wifi {
    margin-left: 21px;
}

.tray-vol {
    margin-left: 11px;
}

.tray-bat {
    margin-left: 10px;
}

.clock {
    margin-left: 19px;
    font-size: 14.5px;
    line-height: 20px;
    text-align: right;
}

.notif {
    width: 20px;
    height: 20px;
    border-radius: 50%;
    background: #0f62c0;
    color: #fff;
    font-size: 12px;
    display: flex;
    align-items: center;
    justify-content: center;
    margin-left: 9px;
}
```
